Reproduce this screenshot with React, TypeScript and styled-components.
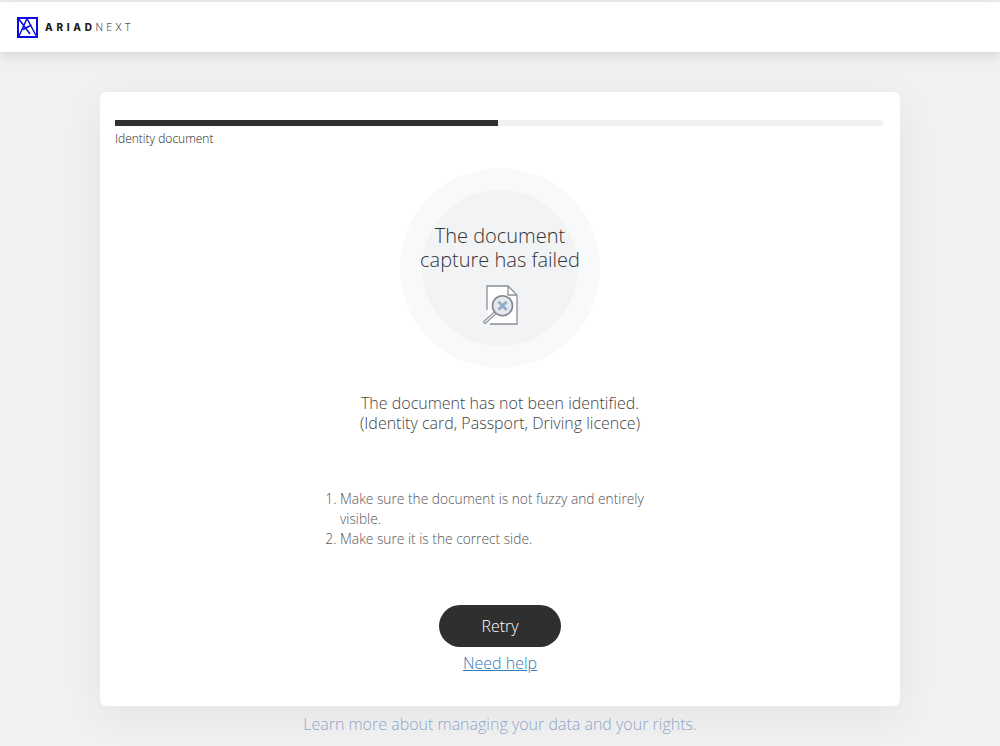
import React from "react";
import styled, { createGlobalStyle } from "styled-components";

const GlobalStyle = createGlobalStyle`
	html, body {
		margin: 0;
		padding: 0;
		height: 746px;
		overflow: hidden;
		background: #f1f1f1;
		font-family: "Open Sans", "Liberation Sans", sans-serif;
		font-weight: 300;
		color: #333;
	}
`;

const Page = styled.div`
	display: flex;
	flex-direction: column;
	align-items: center;
	height: 746px;
`;

const Header = styled.header`
	align-self: stretch;
	display: flex;
	align-items: center;
	gap: 7px;
	box-sizing: border-box;
	height: 50px;
	margin-top: 2px;
	margin-bottom: 40px;
	padding: 0 17px;
	background: #fff;
	box-shadow: 0 2px 12px rgba(0, 0, 0, 0.14);
`;

const Brand = styled.div`
	font-family: "Inter", "Liberation Sans", sans-serif;
	font-size: 10px;
	letter-spacing: 3.7px;
	font-weight: 800;
	color: #1c1c1c;
	span {
		font-weight: 300;
		letter-spacing: 3px;
		color: #555;
	}
`;

const Card = styled.main`
	box-sizing: border-box;
	width: 800px;
	height: 614px;
	padding: 28px 15px 0;
	display: flex;
	flex-direction: column;
	align-items: center;
	background: #fff;
	border-radius: 6px;
	box-shadow: 0 10px 40px rgba(0, 0, 0, 0.06);
`;

const Track = styled.div`
	align-self: flex-start;
	width: 768px;
	height: 6px;
	background: #f1f1f1;
`;

const Fill = styled.div`
	height: 100%;
	background: #2f2f2f;
`;

const StepLabel = styled.div`
	align-self: stretch;
	margin-top: 4px;
	font-size: 12px;
	line-height: 17px;
	color: #222;
`;

const Halo = styled.div`
	width: 200px;
	height: 200px;
	margin-top: 21px;
	padding: 22px;
	box-sizing: border-box;
	border-radius: 50%;
	background: #f8f9fa;
`;

const Disc = styled.div`
	height: 100%;
	padding-top: 34px;
	box-sizing: border-box;
	border-radius: 50%;
	background: #f2f3f5;
	display: flex;
	flex-direction: column;
	align-items: center;
`;

const Title = styled.h1`
	margin: 0 -20px 12px;
	font-size: 20px;
	line-height: 24px;
	font-weight: 300;
	text-align: center;
	color: #333;
`;

const Message = styled.p`
	margin: 25px 0 0;
	font-size: 16px;
	line-height: 20px;
	text-align: center;
	color: #444;
`;

const Steps = styled.ol`
	box-sizing: border-box;
	width: 350px;
	margin: 56px 50px 0 0;
	padding-left: 40px;
	font-size: 13.75px;
	line-height: 20px;
	color: #555;
`;

const RetryButton = styled.button`
	width: 122px;
	height: 42px;
	margin-top: 56px;
	border: 0;
	border-radius: 21px;
	background: #2f2f2f;
	color: #fff;
	font-family: inherit;
	font-size: 16px;
	font-weight: 350;
`;

const HelpLink = styled.a`
	margin-top: 5px;
	font-size: 16px;
	line-height: 22px;
	color: #337ab7;
	text-decoration: underline;
`;

const Footer = styled.a`
	margin-top: 7px;
	font-size: 16px;
	line-height: 22px;
	color: #8fa6c9;
`;

const Logo = () => (
	<svg width="21" height="21" viewBox="0 0 21 21" fill="none" stroke="#0b0be6" strokeWidth="1.5">
		<rect x="1" y="1" width="19" height="19" strokeWidth="2" />
		<path d="M1.5 1.5 L13 17 M10 1.5 L2 19 M10 1.5 L19 18.5 M6 12.5 L14.5 8" />
	</svg>
);

const DocumentIcon = () => (
	<svg width="38" height="42" viewBox="0 0 38 42" fill="none">
		<path d="M6 26 V2 H27 L36 11 V40 H9" stroke="#8b8f96" strokeWidth="1.3" fill="#fff" />
		<path d="M27 2 V11 H36" stroke="#8b8f96" strokeWidth="1.3" />
		<circle cx="21.5" cy="21.7" r="10" fill="#e4e7ec" stroke="#82868d" strokeWidth="1.6" />
		<path d="M17.5 17.7 L25.5 25.7 M25.5 17.7 L17.5 25.7" stroke="#93acc8" strokeWidth="2.8" />
		<path d="M13.5 29.5 L4 38" stroke="#82868d" strokeWidth="3.6" strokeLinecap="round" />
		<path d="M13.5 29.5 L4 38" stroke="#f2f3f5" strokeWidth="1.4" strokeLinecap="round" />
	</svg>
);

export default function App() {
	return (
		<Page>
			<GlobalStyle />
			<Header>
				<Logo />
				<Brand>
					ARIAD<span>NEXT</span>
				</Brand>
			</Header>
			<Card>
				<Track>
					<Fill style={{ width: `${(383 / 768) * 100}%` }} />
				</Track>
				<StepLabel>Identity document</StepLabel>
				<Halo>
					<Disc>
						<Title>
							The document
							<br />
							capture has failed
						</Title>
						<DocumentIcon />
					</Disc>
				</Halo>
				<Message>
					The document has not been identified.
					<br />
					(Identity card, Passport, Driving licence)
				</Message>
				<Steps>
					<li>Make sure the document is not fuzzy and entirely visible.</li>
					<li>Make sure it is the correct side.</li>
				</Steps>
				<RetryButton>Retry</RetryButton>
				<HelpLink href="#">Need help</HelpLink>
			</Card>
			<Footer>Learn more about managing your data and your rights.</Footer>
		</Page>
	);
}
